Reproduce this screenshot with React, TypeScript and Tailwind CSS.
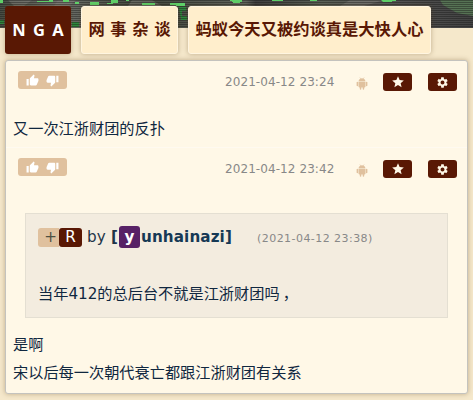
import React from "react";
import { MdThumbUp, MdThumbDown, MdStar, MdSettings } from "react-icons/md";

const cjk = "font-['DejaVu_Sans','Noto_Sans_CJK_SC',sans-serif]";

function Banner() {
  return (
    <svg className="absolute left-0 top-0 h-[28px] w-[473px]" viewBox="0 0 473 28" aria-hidden="true">
      <defs>
        <pattern id="scan" width="4" height="2" patternUnits="userSpaceOnUse">
          <rect width="4" height="1" fill="#141414" fillOpacity="0.4" />
        </pattern>
        <linearGradient id="tone" x1="0" x2="1" y1="0" y2="0">
          <stop offset="0" stopColor="#474d44" />
          <stop offset="0.12" stopColor="#72746f" />
          <stop offset="0.3" stopColor="#42483e" />
          <stop offset="0.52" stopColor="#63675f" />
          <stop offset="0.54" stopColor="#404040" />
          <stop offset="0.68" stopColor="#5b6359" />
          <stop offset="0.8" stopColor="#585858" />
          <stop offset="1" stopColor="#424242" />
        </linearGradient>
      </defs>
      <rect width="473" height="28" fill="url(#tone)" />
      <path d="M8 0h24l-8 6H14zM58 0h18l-7 6H54zM132 0h20l10 6h-34zM350 0h34l-20 6h-24z" fill="#85857f" fillOpacity="0.5" />
      <path d="M440 0h33v16l-16-3-14-8z" fill="#5c8159" fillOpacity="0.75" />
      <path d="M0 20h4v4H0zM72 22h7v5h-7zM179 7h7v4h-4v5h5v4h-6z" fill="#2f8a40" />
      <rect width="473" height="28" fill="url(#scan)" />
      <path d="M0 0h3v3H0zM37 1h12v-1h4v2H37zM63 0h6v2h-6zM75 2h4v2h-4zM90 2h9v3h-9zM111 0h7v3h-5v1h-6V3h4zM126 0h3v1h-3zM142 3h13v2h-13zM170 3h15v3h-9V5h-6zM230 0h12v2h-10V1h-2zM233 2h7v1h-7zM272 0h11v1h-11zM310 0h7v1h-7zM381 0h15v1h-4v1h-9z" fill="#5fd069" />
    </svg>
  );
}

function Android() {
  return (
    <svg className="mt-[16px] h-[13px] w-[12px]" viewBox="0 0 12 13" fill="#e0c19e" aria-hidden="true">
      <path d="M2.5 4.5C2.6 3.2 3.3 2.2 4.3 1.7L3.6.5l.3-.2.8 1.2a4.3 4.3 0 0 1 2.6 0L8.1.3l.3.2-.7 1.2c1 .5 1.7 1.5 1.8 2.8z" />
      <path d="M2.5 4.9h7v4.7a.8.8 0 0 1-.8.8H8.2v1.7a.7.7 0 0 1-1.5 0v-1.7H5.3v1.7a.7.7 0 0 1-1.5 0v-1.7h-.5a.8.8 0 0 1-.8-.8z" />
      <rect x="0.6" y="4.7" width="1.5" height="4.6" rx="0.75" />
      <rect x="9.9" y="4.7" width="1.5" height="4.6" rx="0.75" />
    </svg>
  );
}

function Votes() {
  return (
    <div className="ml-3 mt-[10px] flex h-[18px] w-[49px] items-center gap-[7px] rounded-[3px] bg-[#e0c19e] pl-2 text-white">
      <MdThumbUp size={13} />
      <MdThumbDown size={13} />
    </div>
  );
}

function PostHeader({ time }: { time: string }) {
  return (
    <div className="flex h-[44px] items-start">
      <Votes />
      <span className="ml-[158px] mt-[11px] w-[131px] whitespace-nowrap font-['DejaVu_Sans',sans-serif] text-[12px] leading-[20px] tracking-[0.08px] text-[#888]">
        {time}
      </span>
      <Android />
      <div className="ml-[15px] mt-3 flex gap-4 text-[#fff8e7]">
        <div className="flex h-[18px] w-[29px] items-center justify-center rounded-[3px] bg-[#591804]">
          <MdStar size={14} />
        </div>
        <div className="flex h-[18px] w-[29px] items-center justify-center rounded-[3px] bg-[#591804]">
          <MdSettings size={13} />
        </div>
      </div>
    </div>
  );
}

const crumb =
  "flex h-[48px] shrink-0 items-center justify-center whitespace-nowrap rounded-[3px] font-bold shadow-[0_0_5px_rgba(90,60,20,0.35)]";

export default function App() {
  return (
    <div className={`relative h-[400px] w-[473px] overflow-hidden bg-[#f5e8cb] text-[#10273f] ${cjk}`}>
      <Banner />
      <nav className="relative flex gap-[10px] pl-[5px] pt-[6px] text-[16.3px] text-[#591804]">
        <div className={`${crumb} w-[66px] bg-[#591804] font-['Noto_Sans',sans-serif] text-[16.5px] text-white [word-spacing:3px]`}>
          N G A
        </div>
        <div className={`${crumb} w-[97px] border border-[#fff5e0] bg-[#ffeecc]`}>网 事 杂 谈</div>
        <div className={`${crumb} w-[243px] border border-[#fff5e0] bg-[#ffeecc]`}>蚂蚁今天又被约谈真是大快人心</div>
      </nav>
      <main className="relative ml-[5px] mt-[6px] h-[334px] w-[463px] rounded-[3px] border border-[#c4c3be] bg-[#fff8e7] shadow-[0_0_5px_rgba(90,60,20,0.35)]">
        <article className="h-[87px] border-b border-[#fffaf0]">
          <PostHeader time="2021-04-12 23:24" />
          <p className="ml-[7px] mt-[10px] text-[15.2px] leading-[28px]">又一次江浙财团的反扑</p>
        </article>
        <article>
          <PostHeader time="2021-04-12 23:42" />
          <section className="ml-[19px] mt-[21px] h-[105px] w-[423px] border border-[#e4dfd2] bg-[#f3ecdf] pl-3 pt-[9px] text-[15.2px]">
            <div className="flex h-[28px] items-center whitespace-nowrap text-[#1d3549]">
              <span className="flex h-[19px] w-[21px] items-center justify-end rounded-l-[3px] bg-[#e0c19e] pr-[2px] text-[#4d5042]">+</span>
              <span className="flex h-[19px] w-[23px] items-center justify-center rounded-[3px] bg-[#591804] text-white">R</span>
              <span className="ml-[5px] mt-px w-[24px]">by</span>
              <b className="mt-px w-[8px]">[</b>
              <b className="flex h-[22px] w-[21px] items-center justify-center rounded-[3px] bg-[#572166] pt-px text-[15.2px] text-white">y</b>
              <b className="ml-px mt-px w-[91px] text-[15.2px] tracking-[0.1px] text-[#163955]">unhainazi]</b>
              <span className="ml-[25px] mt-[5px] text-[11px] tracking-[0.45px] text-[#888]">(2021-04-12 23:38)</span>
            </div>
            <p className="mt-[29px] leading-[29px]">
              当年412的总后台不就是江浙财团吗<span className="ml-[3px]">，</span>
            </p>
          </section>
          <p className="ml-[7px] mt-[13px] text-[15.2px] leading-[28px]">
            是啊
            <br />
            宋以后每一次朝代衰亡都跟江浙财团有关系
          </p>
        </article>
      </main>
    </div>
  );
}
